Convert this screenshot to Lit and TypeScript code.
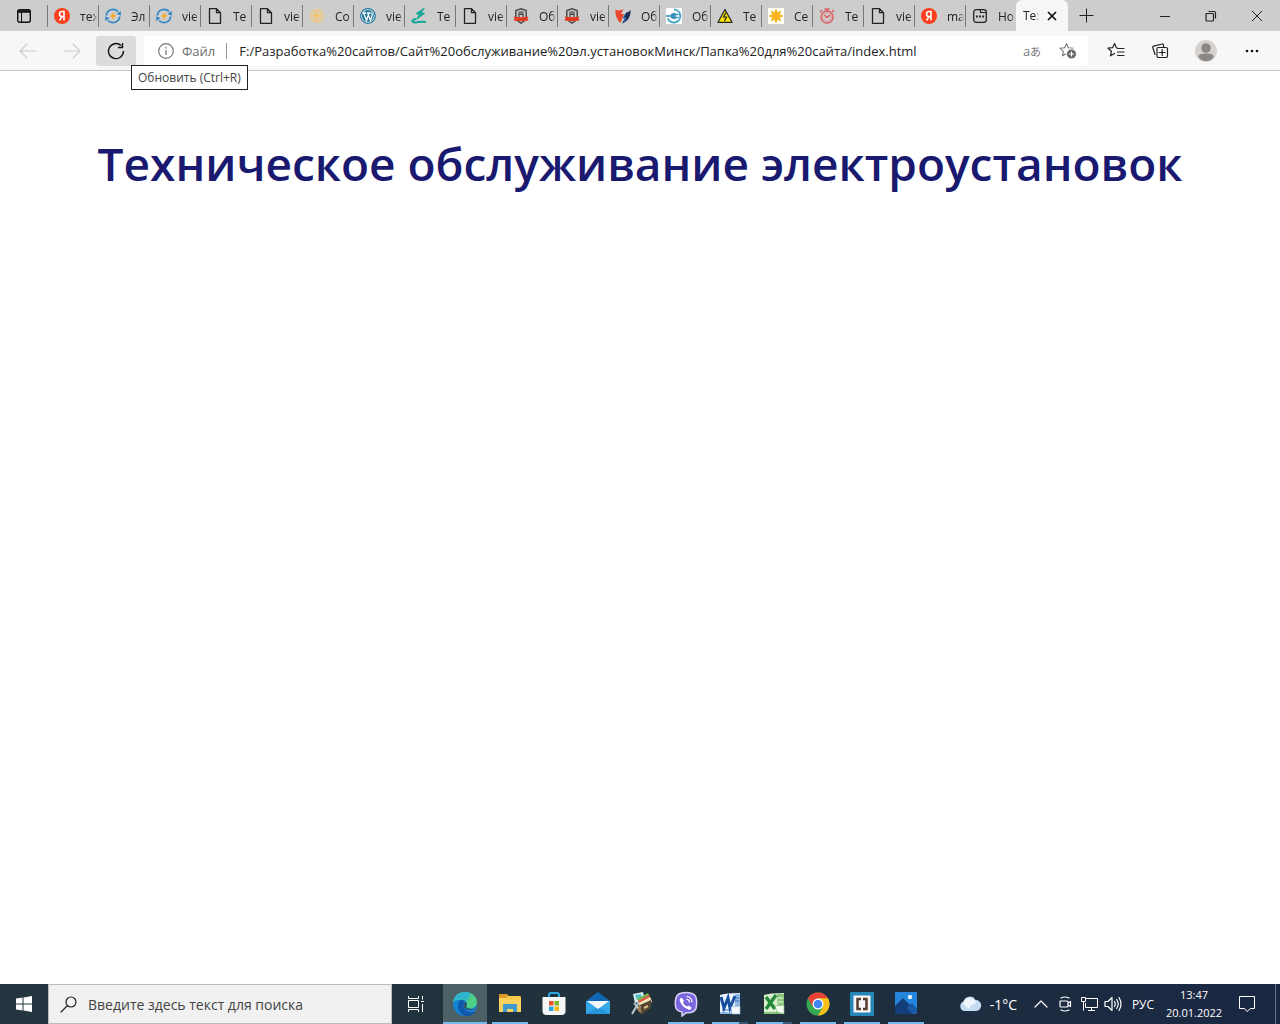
import { css, html, LitElement, svg, type TemplateResult } from "lit";
import { customElement, property } from "lit/decorators.js";
import { classMap } from "lit/directives/class-map.js";

type Icon = TemplateResult;

const icon = (size: number, body: unknown): Icon => html`
	<svg width=${size} height=${size} viewBox="0 0 ${size} ${size}" fill="none" aria-hidden="true">${body}</svg>
`;

const page = icon(16, svg`
	<path d="M2.500.7h7l4 4v10.600h-11z M9.500.7v4h4" stroke="#222" stroke-width="1.300" stroke-linejoin="round"/>
`);

const yandex = icon(16, svg`
	<circle cx="8" cy="8" r="8" fill="#fc3f1d"/>
	<path d="M10 12.500v-9H8.200C6.500 3.500 5.500 4.500 5.500 6c0 1.700 1 2.600 2.600 2.600H10M8 8.600l-2.400 3.900" stroke="#fff" stroke-width="1.600"/>
`);

const energy = icon(16, svg`
	<path d="M1.300 7.500A6.800 6.800 0 0 1 13 3.500M14.700 8.500A6.800 6.800 0 0 1 3 12.500" stroke="#2f87c8" stroke-width="1.800"/>
	<path d="M15.800 3v4.800l-4.300-2zM.2 13V8.200l4.300 2z" fill="#2f87c8"/>
	<path d="M9.500 3.500 5 8.700h2.500L6.500 12.500l4.700-5.500H8.600z" fill="#f6a623"/>
`);

const coin = icon(16, svg`
	<circle cx="8" cy="8" r="7.500" fill="#e3cda6"/>
	<circle cx="8" cy="8" r="5.500" stroke="#e8c58a"/>
	<path d="M8.500 4 5.500 8.500h2L7 12l3.500-5H8.500z" fill="#f8bd4c"/>
`);

const wordpress = icon(16, svg`
	<circle cx="8" cy="8" r="7.300" fill="#f4f8fb" stroke="#21759b" stroke-width="1.200"/>
	<circle cx="8" cy="8" r="6" fill="#21759b"/>
	<path d="M2.800 5h3.400M7 5h3.600M3.800 5.200l2.700 7.300L8.200 7.500M7.800 5.200l2.600 7.300 1.800-5c.4-1.300-.6-2-.6-3" stroke="#fff" stroke-width="1.300"/>
`);

const greenBolt = icon(16, svg`
	<path d="M13.500 0 5 5.500l3 1L5.500 11.500 13.500 5.500l-3-1z" fill="#14a796" stroke="#14a796" stroke-width=".8"/>
	<path d="M5 11c-4 .5-5 3-1.500 3.500 4 0 6-1.500 11.500-.5" stroke="#14a796" stroke-width="2"/>
`);

const shield = icon(16, svg`
	<path d="M8 .8 13.200 2.500v6c0 3-2 5-5.200 6.700C4.800 13.500 2.800 11.500 2.800 8.500v-6z" fill="#c9c9c9" stroke="#4c4c50" stroke-width="1.500"/>
	<path d="M6 3.500v5.500M8 3v3M10 3.500v5.500M6 6.500h4" stroke="#444" stroke-width="1.200"/>
	<path d="M.5 8.500q7.500 1.500 15 0l-1 2 1 2q-7.500 1.500-15 0l1-2z" fill="#e33b22"/>
`);

const redBlue = icon(16, svg`
	<path d="M.5 1.500q3.500 2 8-.5L6 6h3l-3.500 9C2 12 0 7 .5 1.500z" fill="#e8472b"/>
	<path d="M15.500 2c.5 6-2 11-8.500 13.500L10 10H8l3.500-5.500Q14 4 15.500 2z" fill="#1c2c52"/>
	<path d="m11 5-3 5h3l-2 4" stroke="#3773c0"/>
`);

const plug = icon(16, svg`
	<rect width="16" height="16" fill="#fff"/>
	<path d="M8 1.500A6.500 6.500 0 1 1 1.800 10.500" stroke="#4aa9c7" stroke-width="2"/>
	<path d="M0 8h4M9 6.500h3.500M9 9.500h3.500" stroke="#2e8fb8" stroke-width="1.300"/>
	<path d="M9.500 4.800v6.400C6.500 11 4.500 10.500 4 8c.5-2.500 2.500-3.200 5.500-3.200z" fill="#3a8fb8"/>
`);

const warning = icon(16, svg`
	<path d="m8 1.500 7 12.800H1z" fill="#ffe600" stroke="#222" stroke-width="1.200" stroke-linejoin="round"/>
	<path d="M9 4.500 6.500 9h3L7.500 13" stroke="#222" stroke-width="1.200"/>
`);

const sun = icon(16, svg`
	<rect width="16" height="16" fill="#fff"/>
	<path d="m8 1 1.300 3.700L13 3l-1.700 3.700L15 8l-3.700 1.300L13 13l-3.700-1.700L8 15l-1.300-3.700L3 13l1.700-3.700L1 8l3.700-1.300L3 3l3.700 1.700z" fill="#f7b21a" stroke="#f7b21a" stroke-width=".7"/>
`);

const stopwatch = icon(16, svg`
	<circle cx="8" cy="9" r="6" stroke="#d95f63" stroke-width="1.500"/>
	<circle cx="8" cy="9" r="4.200" stroke="#e09a9b"/>
	<path d="M5.500 1h5M8 1v2M1 4l2-2M15 4l-2-2M5.500 7 8 9.500 11 7" stroke="#d95f63" stroke-width="1.500"/>
`);

const dots = icon(16, svg`
	<rect x="1.700" y="1.700" width="12.600" height="12.600" rx="2.500" stroke="#222" stroke-width="1.300"/>
	<path d="M8.500 2v2.500H14" stroke="#222" stroke-width="1.200"/>
	<path d="M4 8.500h1.800M7.100 8.500h1.800M10.200 8.500H12" stroke="#222" stroke-width="1.800"/>
`);

const line = (size: number, d: string): Icon =>
	icon(size, svg`<path d=${d} stroke="currentColor" stroke-width="1.200" stroke-linecap="round" stroke-linejoin="round"/>`);

const crisp = (size: number, d: string): Icon =>
	icon(size, svg`<path d=${d} stroke="currentColor"/>`);

const tabMenu = icon(16, svg`
	<rect x="1.700" y="1.700" width="12.600" height="12.600" rx="2" stroke="#111" stroke-width="1.400"/>
	<path d="M2 3.500h12" stroke="#111" stroke-width="2.500"/>
	<path d="M5.500 4v10" stroke="#111"/>
`);

const star = "m7.500 1.500 1.900 4.200 4.600.5-3.400 3.100.9 4.500-4-2.300-4 2.300.9-4.500L1 6.200l4.600-.5z";

const addFavorite = icon(18, svg`
	<path d=${star} stroke="#777" stroke-width="1.100" stroke-linejoin="round"/>
	<circle cx="12.500" cy="12" r="5" fill="#666" stroke="#fff"/>
	<path d="M12.500 9.500v5M10 12h5" stroke="#fff" stroke-width="1.200"/>
`);

const favorites = line(18, "M10.500 6.200 9.400 5.700 7.500 1.500 5.600 5.700 1 6.200l3.400 3.100-.9 4.500 4-2.300M10.500 6.500H17M10.500 10H17M10.500 13.500H17");

const collections = line(18, "M12.500 4.500V3a1 1 0 0 0-1.300-1L2.500 4.200a1 1 0 0 0-.7 1.300L4 12.500M7 5.500h8a1.500 1.500 0 0 1 1.500 1.500v7a1.500 1.500 0 0 1-1.500 1.500H7.500A1.500 1.500 0 0 1 6 14V6.500a1 1 0 0 1 1-1M11.200 7.500v6M8.200 10.500h6");

const avatar = icon(22, svg`
	<circle cx="11" cy="11" r="11" fill="#d5d2d0"/>
	<circle cx="11" cy="8" r="4.800" fill="#8b8784"/>
	<path d="M3.500 17c0-3 3-3.500 7.500-3.500s7.500.5 7.500 3.500c-1.500 2.500-4 4-7.500 4s-6-1.500-7.500-4z" fill="#8b8784"/>
`);

const edge = icon(26, svg`
	<circle cx="13" cy="13" r="12" fill="#1682d4"/>
	<path d="M1.200 11C2 4.500 7 1 13 1c7 0 12 4.500 12 10 0 4-3 6.500-6.500 6.500-3 0-5-1-4-3 1.500-3-1-6-4.500-6-4 0-7.500 1-8.800 2.500z" fill="#4dcf88"/>
	<path d="M1.200 11C2 4.500 7 1 13 1c3 0 5 1 6 2-2 3-3 5-4 7-1-1.500-3-2-5-1.500-4 0-7.500 1-8.800 2.500z" fill="#2fb4d0"/>
	<path d="M8.500 9c-5 4-2 14.500 5 16 5 .5 8-1.500 10.500-5-6 3-12 0-12.500-4.500-.2-2 .8-3 2-3.500C12.500 10 11 8.500 8.500 9z" fill="#125aa9"/>
	<path d="M13 12c-3 3 0 7 5 7 2 0 4-.5 5.500-1.500-3 1-6 .5-8-.5-2-1-1.500-2-.8-2.700 1-1.500-.2-2.800-1.700-2.300z" fill="#33505c"/>
`);

const explorer = icon(26, svg`
	<path d="M2 3h8l2 2h12v4H2z" fill="#dc9b27"/>
	<path d="M2 7h22v14H2z" fill="#fbd25f"/>
	<path d="M10 5h13v4H10z" fill="#f7c94c"/>
	<path d="M6 21v-7q0-1 1-1h12q1 0 1 1v7h-4v-3h-6v3z" fill="#4299d2"/>
`);

const store = icon(26, svg`
	<path d="M8 7V4q0-2 2-2h6q2 0 2 2v3" stroke="#28a8dc" stroke-width="2"/>
	<path d="M1.500 6h23v14q0 4-4 4h-15q-4 0-4-4z" fill="#f6f6f6"/>
	<path d="M8 10h4.500v4.500H8z" fill="#ef5330"/><path d="M13.500 10H18v4.500h-4.500z" fill="#7db928"/>
	<path d="M8 15.500h4.500V20H8z" fill="#2aa2e0"/><path d="M13.500 15.500H18V20h-4.500z" fill="#fcb717"/>
`);

const mail = icon(26, svg`
	<path d="M1 10 13 1l12 9v13H1z" fill="#1267b4"/>
	<path d="M1 10h24v13H1z" fill="#35a8e8"/>
	<path d="m2 10 11 8 11-8z" fill="#f2f7fb"/>
	<path d="m1 23 12-7 12 7z" fill="#2795dc"/>
	<path d="m9 15 4 3 4-3-4 1z" fill="#f2f7fb"/>
`);

const cardFile = icon(26, svg`
	<path d="m4 3 10-2 2 8-10 3z" fill="#d9eff2"/><path d="m6 4 6-1 1 4-5 2z" fill="#57bac8"/>
	<path d="m8 8 11-6 3 6-11 6z" fill="#76b64f"/><path d="m9 10 11-6 3 6-12 6z" fill="#e35443"/>
	<path d="m10 12 11-6 2 5-12 6z" fill="#f0e8bb"/><path d="m11 14 11-5v8l-9 6z" fill="#554633"/>
	<path d="m11 14 2 9-4-3-2-4z" fill="#9c805a"/><path d="m15 17 4-2" stroke="#ddc181" stroke-width="2"/>
	<path d="m3 23 7-12M5 12l4 5" stroke="#bcc9cc" stroke-width="2"/>
`);

const viber = icon(26, svg`
	<path d="M7 2.500q6-2 12 0 4 1.500 4.500 6t-.5 9q-1 3-5 4-3 .5-5 .3L9 25v-4q-5-1-6-4-1.500-5 0-10 1-3.500 4-4.500z" fill="#7966dc" stroke="#d8d0f7" stroke-width="1.500"/>
	<path d="M8.500 6.500 11 9.500l-1 2q1 3 4 4l1.500-1 3 2q0 2-2 2.500-8-2.500-10-10 .5-2 2-2.500z" fill="#fff"/>
	<path d="M13.500 5.500q5.500.5 5.500 6M13.500 8q3 .5 3 3.500" stroke="#fff" stroke-width="1.200"/>
`);

const word = icon(26, svg`
	<path d="M3 4q5-2 20-2v20H3z" fill="#edf4fb"/><path d="M18 3h5v20h-5zM3 21h20v2H3z" fill="#8eb9e5"/>
	<path d="M18 7h4M18 10h4M5 19h10" stroke="#3977bb"/>
	<path d="m4 6 3 11 4-10 2 10 5-12" stroke="#174f9f" stroke-width="3"/>
	<path d="m14 16 9-1v8h-8z" fill="#f7faff" stroke="#8fb2d6" stroke-width=".7"/>
`);

const excel = icon(26, svg`
	<path d="M3 4q5-2 20-2v20H3z" fill="#d9efce"/><path d="M16 3h7v20h-6zM3 21h20v2H3z" fill="#87c578"/>
	<path d="M4 19h14M17 7h5M17 11h5" stroke="#eef8e9"/>
	<path d="m5 6 9 12M15 4 5 18" stroke="#26883a" stroke-width="3.500"/>
	<path d="m14 15 9-1v9l-7-2z" fill="#f3fbec" stroke="#7bb870" stroke-width=".7"/>
`);

const chrome = icon(26, svg`
	<circle cx="13" cy="13" r="11.500" fill="#34a853"/>
	<path d="M3 7.300A11.500 11.500 0 0 1 23 7.300H13L8 16z" fill="#ea4335"/>
	<path d="M23 7.300A11.500 11.500 0 0 1 13 24.500L18 16l-5-8.700z" fill="#fbc116"/>
	<circle cx="13" cy="13" r="5.500" fill="#fff"/><circle cx="13" cy="13" r="4.300" fill="#4285f4"/>
`);

const brackets = icon(26, svg`
	<rect x="1" y="1" width="24" height="24" rx="1" fill="#2487b8"/>
	<rect x="4.500" y="4.500" width="17" height="17" fill="#f5f6f7"/>
	<path d="M12 8H8.500v10H12M14 8h3.500v10H14" stroke="#583c32" stroke-width="2.500"/>
`);

const photos = icon(26, svg`
	<rect x="2" y="1" width="22" height="22" rx="1" fill="#2485dc"/>
	<path d="M2 15 10 7l14 14v2H2z" fill="#143e79"/><path d="m14 17 5-5 5 6v5h-5z" fill="#1b5aa5"/>
	<circle cx="17" cy="6" r="2.200" fill="#e0f3ff"/>
`);

const cloud = icon(24, svg`
	<path d="M6 19a5 5 0 0 1-.5-9.500A6.500 6.500 0 0 1 17.500 8 5.500 5.500 0 0 1 18 19z" fill="#c5ddf3"/>
	<path d="M5 11q2-5 6-5 5 0 7 5-5 1-7 6-4-2-6-6z" fill="#eef6fc"/>
`);

const searchIcon = line(18, "M7 11 1 17M6 7a5 5 0 1 0 10 0 5 5 0 1 0-10 0");
const startIcon = icon(18, svg`<path d="M1 3.500 7.500 2.500V8.500H1zM8.500 2.400 17 1v7.500H8.500zM1 9.500h6.500v6L1 14.500zM8.500 9.500H17V17l-8.500-1.400z" fill="#fff"/>`);
const taskView = crisp(18, "M1.500 1v2.500h10V1M1.500 5.500h10v7h-10zM1.500 17v-2.500h10V17M15.500 1v3.500M15.500 9v8M14 6.500h3");

interface TabInfo {
	title: string;
	icon: Icon;
}

const tabs: TabInfo[] = [
	{ title: "тех", icon: yandex },
	{ title: "Эл", icon: energy },
	{ title: "vie", icon: energy },
	{ title: "Те", icon: page },
	{ title: "vie", icon: page },
	{ title: "Со", icon: coin },
	{ title: "vie", icon: wordpress },
	{ title: "Те", icon: greenBolt },
	{ title: "vie", icon: page },
	{ title: "Об", icon: shield },
	{ title: "vie", icon: shield },
	{ title: "Об", icon: redBlue },
	{ title: "Об", icon: plug },
	{ title: "Те", icon: warning },
	{ title: "Се", icon: sun },
	{ title: "Те", icon: stopwatch },
	{ title: "vie", icon: page },
	{ title: "ma", icon: yandex },
	{ title: "Но", icon: dots },
];

interface TaskApp {
	name: string;
	icon: Icon;
	open?: boolean;
	active?: boolean;
	stacked?: boolean;
}

const apps: TaskApp[] = [
	{ name: "Edge", icon: edge, open: true, active: true },
	{ name: "Проводник", icon: explorer, open: true },
	{ name: "Store", icon: store },
	{ name: "Почта", icon: mail },
	{ name: "Картотека", icon: cardFile },
	{ name: "Viber", icon: viber, open: true },
	{ name: "Word", icon: word, open: true, stacked: true },
	{ name: "Excel", icon: excel, open: true, stacked: true },
	{ name: "Chrome", icon: chrome, open: true },
	{ name: "Brackets", icon: brackets, open: true },
	{ name: "Фотографии", icon: photos, open: true },
];

const controls = css`
	* {
		box-sizing: border-box;
	}

	button,
	input {
		margin: 0;
		padding: 0;
		border: 0;
		background: none;
		color: inherit;
		font: inherit;
		outline: none;
	}

	button {
		display: flex;
		align-items: center;
		justify-content: center;
		flex: none;
	}

	svg {
		display: block;
		flex: none;
	}
`;

@customElement("tab-strip")
export class TabStrip extends LitElement {
	@property({ attribute: false })
	tabs: TabInfo[] = [];

	static override styles = [
		controls,
		css`
			:host {
				display: flex;
				block-size: 31px;
				background: #cdcdcd;
				color: #222;
				font-size: 12px;
			}

			.menu {
				inline-size: 47px;
			}

			.tabs {
				display: flex;
				flex: 0 1 969px;
				min-inline-size: 0;
			}

			.tab {
				flex: 0 1 51px;
				min-inline-size: 0;
				justify-content: flex-start;
				gap: 10px;
				padding-inline-start: 6px;
				border-inline-start: 1px solid #777;
				block-size: 22px;
				margin-block: 5px 4px;
			}

			.title {
				flex: 1;
				overflow: hidden;
				text-align: start;
				white-space: nowrap;
				mask-image: linear-gradient(to right, #000 70%, transparent 95%);
			}

			.current {
				display: flex;
				align-items: center;
				gap: 3px;
				flex: none;
				inline-size: 52px;
				padding-inline: 7px;
				border-radius: 6px 6px 0 0;
				background: #f7f7f7;
			}

			.close {
				inline-size: 18px;
				block-size: 18px;
			}

			.add {
				inline-size: 36px;
			}

			.window {
				display: flex;
				margin-inline-start: auto;
			}

			.window button {
				inline-size: 46px;
			}
		`,
	];

	override render() {
		return html`
			<button class="menu" aria-label="Меню вкладок">${tabMenu}</button>
			<div class="tabs" role="tablist">
				${this.tabs.map(
					(tab) => html`
						<button class="tab" role="tab">${tab.icon}<span class="title">${tab.title}</span></button>
					`,
				)}
			</div>
			<div class="current">
				<span class="title">Тех</span>
				<button class="close" aria-label="Закрыть вкладку">
					${icon(10, svg`<path d="m1 1 8 8M9 1 1 9" stroke="#111" stroke-width="1.700"/>`)}
				</button>
			</div>
			<button class="add" aria-label="Новая вкладка">${crisp(15, "M7.500 0.500v14M0.500 7.500h14")}</button>
			<div class="window">
				<button aria-label="Свернуть">${crisp(12, "M1 6.500h10")}</button>
				<button aria-label="Восстановить">
					${line(12, "M2 3.500h5.500a1 1 0 0 1 1 1V10a1 1 0 0 1-1 1H2a1 1 0 0 1-1-1V4.500a1 1 0 0 1 1-1M4 1.500h5A1.500 1.500 0 0 1 10.500 3v5")}
				</button>
				<button aria-label="Закрыть">${crisp(12, "m1 1 10 10M11 1 1 11")}</button>
			</div>
		`;
	}
}

@customElement("nav-bar")
export class NavBar extends LitElement {
	@property()
	url = "";

	static override styles = [
		controls,
		css`
			:host {
				display: flex;
				align-items: center;
				block-size: 39px;
				padding-inline: 6px;
				border-block-end: 1px solid #c6c6c6;
				background: #f7f7f7;
				color: #222;
				font-size: 13px;
			}

			.action {
				inline-size: 44px;
				block-size: 30px;
			}

			.account {
				margin-inline: 2px;
			}

			.disabled {
				color: #ccc;
			}

			.reload {
				position: relative;
				inline-size: 40px;
				margin-inline: 2px 8px;
				border-radius: 3px;
				background: #dcdcdc;
			}

			.tooltip {
				position: absolute;
				inset-block-start: 29px;
				inset-inline-start: 35px;
				padding: 4px 6px;
				border: 1px solid #222;
				background: #fff;
				color: #444;
				font-size: 12px;
				line-height: 15px;
				white-space: nowrap;
			}

			.address {
				display: flex;
				align-items: center;
				flex: 1;
				min-inline-size: 0;
				block-size: 30px;
				padding-inline: 14px 10px;
				margin-inline-end: 6px;
				border-radius: 4px;
				background: #fff;
			}

			.scheme {
				display: flex;
				align-items: center;
				gap: 8px;
				padding-inline-end: 11px;
				border-inline-end: 1px solid #999;
				margin-inline-end: 12px;
				color: #707070;
				line-height: 16px;
			}

			.address input {
				flex: 1;
				min-inline-size: 0;
				color: #222;
			}

			.translate {
				inline-size: 36px;
				color: #777;
				font-family: "Open Sans", "Noto Sans CJK JP", sans-serif;
			}

			.translate small {
				font-size: 11px;
			}

			.favorite {
				inline-size: 36px;
				margin-inline-end: -8px;
			}
		`,
	];

	override render() {
		return html`
			<button class="action disabled" aria-label="Назад">${line(18, "M17 9H1M8 2 1 9l7 7")}</button>
			<button class="action disabled" aria-label="Вперед">${line(18, "M1 9h16M10 2l7 7-7 7")}</button>
			<button class="action reload" aria-label="Обновить">
				${icon(18, svg`<path d="M16.500 9A7.500 7.500 0 1 1 14 3.500M15.500 1v4.500H11" stroke="#111" stroke-width="1.400"/>`)}
				<span class="tooltip" role="tooltip">Обновить (Ctrl+R)</span>
			</button>
			<div class="address">
				<label class="scheme" for="url">
					${icon(16, svg`<circle cx="8" cy="8" r="7.300" stroke="#777" stroke-width="1.200"/><path d="M8 7v5M8 4v1.500" stroke="#777" stroke-width="1.300"/>`)}
					Файл
				</label>
				<input id="url" type="text" .value=${this.url} spellcheck="false" />
				<button class="translate" aria-label="Перевести">a<small>あ</small></button>
				<button class="favorite" aria-label="Добавить в избранное">${addFavorite}</button>
			</div>
			<button class="action" aria-label="Избранное">${favorites}</button>
			<button class="action" aria-label="Коллекции">${collections}</button>
			<button class="action account" aria-label="Профиль">${avatar}</button>
			<button class="action" aria-label="Параметры">
				${icon(16, svg`<g fill="#111"><circle cx="3" cy="8" r="1.300"/><circle cx="8" cy="8" r="1.300"/><circle cx="13" cy="8" r="1.300"/></g>`)}
			</button>
		`;
	}
}

@customElement("task-bar")
export class TaskBar extends LitElement {
	@property({ attribute: false })
	apps: TaskApp[] = [];

	static override styles = [
		controls,
		css`
			:host {
				display: flex;
				align-items: stretch;
				block-size: 40px;
				background: linear-gradient(to right, #23363f, #20303c 60%, #1a2744);
				color: #fff;
				font-size: 12px;
			}

			.start {
				inline-size: 48px;
			}

			.search {
				display: flex;
				align-items: center;
				gap: 10px;
				flex: 0 1 344px;
				min-inline-size: 0;
				padding-inline: 11px;
				border: 1px solid #bbb;
				background: #f1f1f1;
				color: #222;
				font-size: 14px;
			}

			.search input {
				flex: 1;
				min-inline-size: 0;
			}

			.search input::placeholder {
				color: #444;
				opacity: 1;
			}

			.view {
				inline-size: 48px;
				margin-inline-end: 3px;
			}

			.app {
				position: relative;
				inline-size: 44px;
			}

			.active {
				margin-inline-end: 1px;
				background: #4c6068;
			}

			.open::after {
				content: "";
				position: absolute;
				inset: auto 4px 0;
				block-size: 2px;
				background: #76b9ed;
			}

			.active::after {
				inset-inline: 0;
			}

			.stacked::after {
				background: linear-gradient(to right, #76b9ed 27px, #3b5b7b 27px);
			}

			.tray {
				display: flex;
				align-items: stretch;
				margin-inline-start: auto;
			}

			.weather {
				gap: 8px;
				padding-inline-end: 12px;
				font-size: 14px;
			}

			.tray .status {
				inline-size: 24px;
			}

			.language {
				inline-size: 36px;
			}

			.clock {
				flex-direction: column;
				inline-size: 66px;
				font-size: 11px;
				line-height: 18px;
			}

			.notices {
				inline-size: 40px;
			}

			.desktop {
				inline-size: 5px;
				margin-inline-start: 8px;
				border-inline-start: 1px solid #66718a;
			}
		`,
	];

	override render() {
		return html`
			<button class="start" aria-label="Пуск">${startIcon}</button>
			<label class="search">
				${searchIcon}
				<input type="text" placeholder="Введите здесь текст для поиска" />
			</label>
			<button class="view" aria-label="Представление задач">${taskView}</button>
			${this.apps.map(
				(app) => html`
					<button
						class=${classMap({ app: true, open: !!app.open, active: !!app.active, stacked: !!app.stacked })}
						aria-label=${app.name}
					>
						${app.icon}
					</button>
				`,
			)}
			<div class="tray">
				<button class="weather">${cloud}<span>-1°C</span></button>
				<button class="status" aria-label="Скрытые значки">${line(14, "m1 10 6-6 6 6")}</button>
				<button class="status" aria-label="Камера">
					${line(16, "M3 5h7q1 0 1 1v4q0 1-1 1H4q-1 0-1-1zM11 7l2.500-1.500v5L11 9M4 2q4-2 8 0M4 14q4 2 8 0")}
				</button>
				<button class="status" aria-label="Сеть">${crisp(18, "M6 3.500h11.500v9H5.500V8M8 15.500h7M11.500 12.500v3M1.500 2.500h4v4h-4zM3.500 6.500v9")}</button>
				<button class="status" aria-label="Звук">${line(18, "M1 6.500h3l4-4v13l-4-4H1zM10.500 6.500q1.500 2.500 0 5M12.700 4.500q3 4.500 0 9M15 2.500q4 6.500 0 13")}</button>
				<button class="language">РУС</button>
				<button class="clock"><time>13:47</time><time>20.01.2022</time></button>
				<button class="notices" aria-label="Уведомления">${crisp(18, "M1.500 1.500h15v12h-4L9 16.500l-2.500-3h-5z")}</button>
				<button class="desktop" aria-label="Показать рабочий стол"></button>
			</div>
		`;
	}
}

@customElement("app-root")
export class AppRoot extends LitElement {
	static override styles = css`
		:host {
			display: flex;
			flex-direction: column;
			min-block-size: 100vh;
			background: #fff;
			font-family: "Open Sans", "Noto Sans", sans-serif;
		}

		main {
			flex: 1;
			padding: 58px 20px;
		}

		h1 {
			margin: 0;
			color: #191970;
			font-size: 46px;
			font-weight: 600;
			line-height: 68px;
			text-align: center;
		}
	`;

	override render() {
		return html`
			<tab-strip .tabs=${tabs}></tab-strip>
			<nav-bar
				url="F:/Разработка%20сайтов/Сайт%20обслуживание%20эл.установокМинск/Папка%20для%20сайта/index.html"
			></nav-bar>
			<main>
				<h1>Техническое обслуживание электроустановок</h1>
			</main>
			<task-bar .apps=${apps}></task-bar>
		`;
	}
}

declare global {
	interface HTMLElementTagNameMap {
		"app-root": AppRoot;
		"tab-strip": TabStrip;
		"nav-bar": NavBar;
		"task-bar": TaskBar;
	}
}
